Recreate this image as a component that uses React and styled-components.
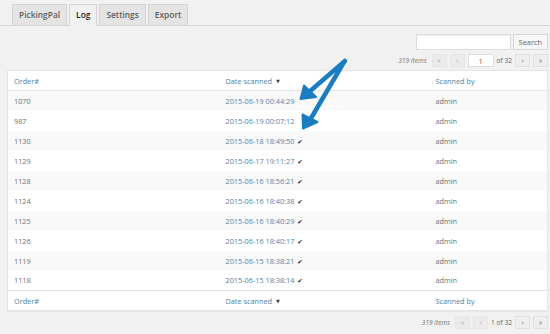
import React from "react";
import styled, { createGlobalStyle } from "styled-components";

const GlobalStyle = createGlobalStyle`
  html, body { margin: 0; padding: 0; background: #f1f1f1; }
  body { font-family: "Open Sans", "Noto Sans", sans-serif; color: #555; }
  * { box-sizing: border-box; }
`;

const Page = styled.div`
  position: relative;
  width: 550px;
  height: 334px;
  padding: 4px 2px 0 7px;
  overflow: hidden;
`;

const TabBar = styled.div`
  display: flex;
  align-items: flex-end;
  gap: 2px;
  height: 22px;
  margin-left: -7px;
  margin-right: -2px;
  padding-left: 12px;
  border-bottom: 1px solid #d4d4d4;
`;

const Tab = styled.div`
  line-height: 20px;
  padding: 0 6px;
  font-size: 8.4px;
  font-weight: 600;
  border: 1px solid #d4d4d4;
  border-bottom: none;
  margin-bottom: ${(p) => (p.$active ? "-1px" : "0")};
  height: ${(p) => (p.$active ? "22px" : "21px")};
  background: ${(p) => (p.$active ? "#f1f1f1" : "#e4e4e4")};
  color: ${(p) => (p.$active ? "#222" : "#5f5f5f")};
`;

const SearchRow = styled.div`
  display: flex;
  justify-content: flex-end;
  gap: 2px;
  margin-top: 8px;
`;

const SearchInput = styled.div`
  width: 95px;
  height: 16px;
  background: #fff;
  border: 1px solid #dcdcdc;
  box-shadow: inset 0 1px 1px rgba(0, 0, 0, 0.05);
`;

const Button = styled.div`
  height: 16px;
  padding: 0 5px;
  line-height: 14px;
  font-size: 7.4px;
  color: #666;
  background: #f7f7f7;
  border: 1px solid #d6d6d6;
`;

const PagRow = styled.div`
  display: flex;
  justify-content: flex-end;
  align-items: center;
  gap: 3px;
  height: 13px;
  margin-top: ${(p) => p.$mt || 4}px;
  font-size: 6.6px;
  color: #666;
`;

const Count = styled.span`
  font-style: italic;
  margin-right: 2px;
  color: #777;
`;

const PagBtn = styled.span`
  display: inline-flex;
  align-items: center;
  justify-content: center;
  width: 15px;
  height: 13px;
  font-size: 7px;
  background: ${(p) => (p.$disabled ? "#ebebeb" : "#eeeeee")};
  color: ${(p) => (p.$disabled ? "#b0b3b6" : "#777")};
  border: 1px solid ${(p) => (p.$disabled ? "#e6e6e6" : "#e0e0e0")};
`;

const PageInput = styled.span`
  display: inline-flex;
  align-items: center;
  justify-content: center;
  width: 26px;
  height: 13px;
  background: #fff;
  border: 1px solid #dedede;
  font-size: 7.4px;
  color: #555;
`;

const Table = styled.table`
  width: 541px;
  margin-top: 3px;
  border-collapse: collapse;
  table-layout: fixed;
  background: #fff;
  border: 1px solid #e5e5e5;
  box-shadow: 0 1px 1px rgba(0, 0, 0, 0.04);
  font-size: 7.3px;
`;

const Th = styled.th`
  height: 20px;
  padding: 0 0 0 6px;
  text-align: left;
  font-weight: 400;
  color: #4a7fa8;
  border-${(p) => (p.$foot ? "top" : "bottom")}: 1px solid #e3e3e3;
`;

const Row = styled.tr`
  background: ${(p) => (p.$odd ? "#f9f9f9" : "#fff")};
`;

const Td = styled.td`
  height: 20px;
  padding: 0 0 0 6px;
  color: ${(p) => (p.$link ? "#4f83ab" : "#707070")};
  white-space: nowrap;
`;

const Caret = styled.span`
  font-family: "DejaVu Sans", sans-serif;
  font-size: 5px;
  color: #444;
  margin-left: 4px;
  vertical-align: 1px;
`;

const Check = styled.span`
  font-family: "DejaVu Sans", sans-serif;
  font-size: 6.5px;
  color: #2a2a2a;
  margin-left: 3px;
`;

const Overlay = styled.svg`
  position: absolute;
  left: 0;
  top: 0;
  pointer-events: none;
`;

const rows = [
  ["1070", "2015-06-19 00:44:29", false],
  ["987", "2015-06-19 00:07:12", false],
  ["1130", "2015-06-18 18:49:50", true],
  ["1129", "2015-06-17 19:11:27", true],
  ["1128", "2015-06-16 18:56:21", true],
  ["1124", "2015-06-16 18:40:38", true],
  ["1125", "2015-06-16 18:40:29", true],
  ["1126", "2015-06-16 18:40:17", true],
  ["1119", "2015-06-15 18:38:21", true],
  ["1118", "2015-06-15 18:38:14", true],
];

const HeadCells = ({ foot }) => (
  <tr>
    <Th $foot={foot}>Order#</Th>
    <Th $foot={foot}>
      Date scanned<Caret>▼</Caret>
    </Th>
    <Th $foot={foot}>Scanned by</Th>
  </tr>
);

export default function App() {
  return (
    <>
      <GlobalStyle />
      <Page>
        <TabBar>
          <Tab>PickingPal</Tab>
          <Tab $active>Log</Tab>
          <Tab>Settings</Tab>
          <Tab>Export</Tab>
        </TabBar>
        <SearchRow>
          <SearchInput />
          <Button>Search</Button>
        </SearchRow>
        <PagRow>
          <Count>319 items</Count>
          <PagBtn $disabled>«</PagBtn>
          <PagBtn $disabled>‹</PagBtn>
          <PageInput>1</PageInput>
          <span>of 32</span>
          <PagBtn>›</PagBtn>
          <PagBtn>»</PagBtn>
        </PagRow>
        <Table>
          <colgroup>
            <col style={{ width: "212px" }} />
            <col style={{ width: "210px" }} />
            <col />
          </colgroup>
          <thead>
            <HeadCells />
          </thead>
          <tbody>
            {rows.map(([id, date, ok], i) => (
              <Row key={id} $odd={i % 2 === 0}>
                <Td>{id}</Td>
                <Td $link>
                  {date}
                  {ok && <Check>✔</Check>}
                </Td>
                <Td>admin</Td>
              </Row>
            ))}
          </tbody>
          <tfoot>
            <HeadCells foot />
          </tfoot>
        </Table>
        <PagRow $mt={5}>
          <Count>319 items</Count>
          <PagBtn $disabled>«</PagBtn>
          <PagBtn $disabled>‹</PagBtn>
          <span>1 of 32</span>
          <PagBtn>›</PagBtn>
          <PagBtn>»</PagBtn>
        </PagRow>
        <Overlay width="550" height="334" viewBox="0 0 550 334">
          <g stroke="#1a7cc1" strokeWidth="4.5" strokeLinecap="round" fill="none">
            <path d="M345 61 L309 92" />
            <path d="M344 62 L310 120" />
          </g>
          <g fill="#1a7cc1" stroke="#1a7cc1" strokeWidth="2" strokeLinejoin="round">
            <polygon points="300.5,99 304,85.5 316,97" />
            <polygon points="303,128.5 302.5,114.5 317.5,122" />
          </g>
        </Overlay>
      </Page>
    </>
  );
}
